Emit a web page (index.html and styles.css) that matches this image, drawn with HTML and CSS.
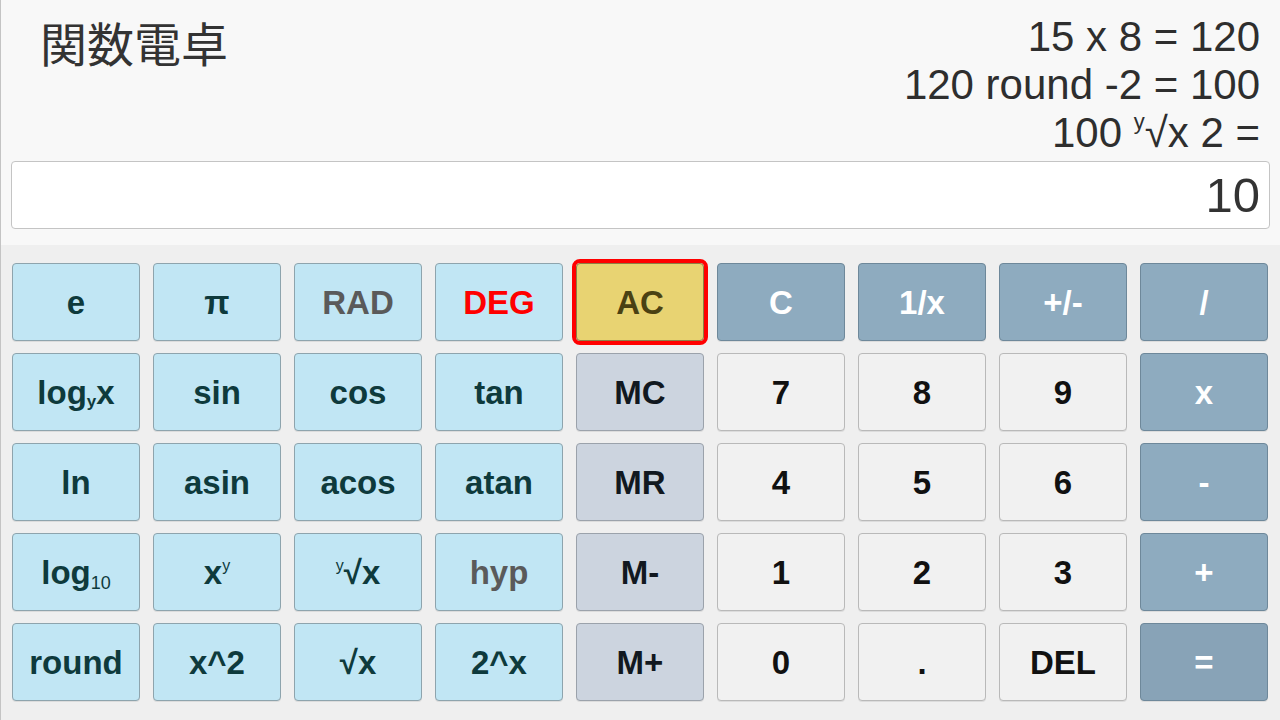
FILE: index.html
```html
<!DOCTYPE html>
<html lang="ja">
<head>
<meta charset="utf-8">
<title>関数電卓</title>
<link rel="stylesheet" href="styles.css">
</head>
<body>
<div class="app">
  <header class="top">
    <div class="head-row">
      <h1 class="title">関数電卓</h1>
      <div class="history">
        <div class="line">15 x 8 = 120</div>
        <div class="line">120 round -2 = 100</div>
        <div class="line">100 <sup class="hsup">y</sup>√x 2 =</div>
      </div>
    </div>
    <div class="display">10</div>
  </header>
  <main class="keypad">
    <button class="key fn">e</button>
    <button class="key fn">π</button>
    <button class="key fn mode">RAD</button>
    <button class="key fn mode-on">DEG</button>
    <button class="key ac">AC</button>
    <button class="key op">C</button>
    <button class="key op">1/x</button>
    <button class="key op">+/-</button>
    <button class="key op">/</button>

    <button class="key fn">log<sub class="ksub">y</sub>x</button>
    <button class="key fn">sin</button>
    <button class="key fn">cos</button>
    <button class="key fn">tan</button>
    <button class="key mem">MC</button>
    <button class="key num">7</button>
    <button class="key num">8</button>
    <button class="key num">9</button>
    <button class="key op">x</button>

    <button class="key fn">ln</button>
    <button class="key fn">asin</button>
    <button class="key fn">acos</button>
    <button class="key fn">atan</button>
    <button class="key mem">MR</button>
    <button class="key num">4</button>
    <button class="key num">5</button>
    <button class="key num">6</button>
    <button class="key op">-</button>

    <button class="key fn">log<sub class="ksub10">10</sub></button>
    <button class="key fn">x<sup class="ksup">y</sup></button>
    <button class="key fn"><sup class="ksup">y</sup>√x</button>
    <button class="key fn mode">hyp</button>
    <button class="key mem">M-</button>
    <button class="key num">1</button>
    <button class="key num">2</button>
    <button class="key num">3</button>
    <button class="key op">+</button>

    <button class="key fn">round</button>
    <button class="key fn">x^2</button>
    <button class="key fn">√x</button>
    <button class="key fn">2^x</button>
    <button class="key mem">M+</button>
    <button class="key num">0</button>
    <button class="key num">.</button>
    <button class="key num">DEL</button>
    <button class="key op eq">=</button>
  </main>
</div>
</body>
</html>
```
FILE: styles.css
```css
* { box-sizing: border-box; }

html, body {
  margin: 0;
  padding: 0;
}

body {
  width: 1280px;
  height: 720px;
  overflow: hidden;
  font-family: "Liberation Sans", Arial, "Noto Sans CJK JP", sans-serif;
  background: #efefef;
}

.app {
  width: 1280px;
  height: 720px;
  border-left: 1px solid #c4c4c4;
  display: flex;
  flex-direction: column;
}

.top {
  height: 245px;
  background: #f8f8f8;
  padding: 12px 0 0 10px;
}

.head-row {
  display: flex;
  justify-content: space-between;
  align-items: flex-start;
  padding-right: 20px;
  height: 149px;
}

.title {
  margin: 6px 0 0 29px;
  font-family: "Noto Sans CJK JP", sans-serif;
  font-weight: 400;
  font-size: 47px;
  line-height: 1;
  color: #333;
}

.history {
  text-align: right;
  font-size: 42px;
  line-height: 48px;
  color: #2e2e2e;
  padding-top: 1px;
}

.hsup {
  font-size: 22px;
  vertical-align: 18px;
  line-height: 0;
}

.display {
  width: 1259px;
  height: 68px;
  border: 1px solid #c4c4c4;
  border-radius: 4px;
  background: #fff;
  text-align: right;
  font-size: 49px;
  line-height: 66px;
  padding: 0 9px 0 0;
  color: #333;
}

.keypad {
  flex: 1;
  background: #efefef;
  display: grid;
  grid-template-columns: repeat(9, 128px);
  grid-template-rows: repeat(5, 78px);
  column-gap: 13px;
  row-gap: 12px;
  padding: 18px 0 0 11px;
  align-content: start;
}

.key {
  font-family: "Liberation Sans", Arial, sans-serif;
  font-weight: 700;
  font-size: 33px;
  border: 1px solid #999;
  border-radius: 4px;
  padding: 0;
  margin: 0;
  line-height: 1;
  text-align: center;
  box-shadow: 0 1px 0 rgba(0,0,0,0.08);
}

.fn {
  background: #c1e6f4;
  border-color: #8ea4ad;
  color: #0e3a3c;
}

.fn.mode { color: #5a5a5a; }
.fn.mode-on { color: #ff0000; }

.ac {
  background: #e8d372;
  border-color: #8d7f45;
  color: #4a4113;
  outline: 4px solid #ff0000;
  outline-offset: 0;
}

.op {
  background: #8eabbf;
  border-color: #6e889a;
  color: #ffffff;
}

.op.eq { background: #88a3b7; }

.mem {
  background: #ccd4df;
  border-color: #9ba2ab;
  color: #111820;
}

.num {
  background: #f1f1f1;
  border-color: #b9b9b9;
  color: #111;
}

.ksub {
  font-size: 17px;
  vertical-align: -3px;
  line-height: 0;
}

.ksub10 {
  font-size: 18px;
  font-weight: 400;
  vertical-align: -5px;
  line-height: 0;
}

.ksup {
  font-size: 16px;
  font-weight: 400;
  vertical-align: 13px;
  line-height: 0;
}
```
